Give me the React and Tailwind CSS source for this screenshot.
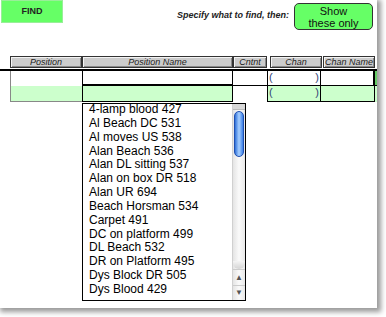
import React from "react";

const items = [
  "4-lamp blood 427",
  "Al Beach DC 531",
  "Al moves US 538",
  "Alan Beach 536",
  "Alan DL sitting 537",
  "Alan on box DR 518",
  "Alan UR 694",
  "Beach Horsman 534",
  "Carpet 491",
  "DC on platform 499",
  "DL Beach 532",
  "DR on Platform 495",
  "Dys Block DR 505",
  "Dys Blood 429",
];

function Hdr({ w, children }) {
  return (
    <div
      className={`${w} h-[12px] bg-[#cccccc] border border-[#333] shadow-[inset_1px_1px_0_#f4f4f4,inset_-1px_-1px_0_#888] flex items-center justify-center text-[9px] italic leading-none text-[#222]`}
    >
      {children}
    </div>
  );
}

function Paren() {
  return (
    <div className="flex justify-between px-[1px] text-[11px] leading-[13px] text-[#334477]">
      <span>(</span>
      <span>)</span>
    </div>
  );
}

export default function App() {
  return (
    <div className="w-[386px] h-[317px] bg-white overflow-hidden" style={{ fontFamily: '"Liberation Sans", Arial, sans-serif' }}>
      <div className="w-[377px] h-[308px] bg-white shadow-[2px_2px_5px_2px_rgba(0,0,0,0.4)] flex flex-col">
        {/* top bar */}
        <div className="flex items-start h-[31px]">
          <div className="ml-[1px] w-[62px] h-[23px] bg-[#66ff66] border border-[#99ee99] flex items-center justify-center text-[9px] font-bold text-[#222]">
            FIND
          </div>
          <div className="ml-auto mt-[9px] text-[9px] font-bold italic text-[#222]">
            Specify what to find, then:
          </div>
          <div className="ml-[5px] mr-[4px] mt-[3px] w-[79px] h-[27px] rounded-[5px] bg-[#66ff66] border border-[#333] flex items-center justify-center text-center text-[11px] leading-[12px] text-[#111]">
            Show
            <br />
            these only
          </div>
        </div>

        {/* header */}
        <div className="mt-[25px] flex pl-[10px]">
          <Hdr w="w-[72px]">Position</Hdr>
          <Hdr w="w-[151px]">Position Name</Hdr>
          <Hdr w="w-[34px]">Cntnt</Hdr>
          <div className="w-[3px]" />
          <Hdr w="w-[52px]">Chan</Hdr>
          <div className="w-[1px]" />
          <Hdr w="w-[52px]">Chan Name</Hdr>
        </div>

        {/* divider line */}
        <div className="mt-[1px] h-[2px] w-[377px] bg-black" />

        {/* row 1 */}
        <div className="flex h-[15px]">
          <div className="w-[10px]" />
          <div className="w-[72px] border-l border-[#888] bg-white" />
          <div className="w-[151px] border-x border-b-2 border-black bg-white" />
          <div className="w-[35px] border-r border-b border-black bg-white" />
          <div className="w-[53px] border-r border-b border-black bg-white">
            <Paren />
          </div>
          <div className="w-[54px] border-r-2 border-b border-black bg-white" />
          <div className="w-[2px] bg-[#66cc66] border-b border-black" />
        </div>

        {/* row 2 */}
        <div className="flex h-[16px]">
          <div className="w-[10px]" />
          <div className="w-[72px] border-l border-b border-[#888] bg-[#ccffcc]" />
          <div className="w-[151px] border-x border-b border-black bg-[#ccffcc]" />
          <div className="w-[35px] bg-white" />
          <div className="-ml-[1px] w-[54px] border-x border-b border-black bg-[#ccffcc]">
            <Paren />
          </div>
          <div className="w-[54px] border-r border-b border-black bg-[#ccffcc]" />
          <div className="w-[2px] bg-[#ccffcc]" />
        </div>

        {/* listbox */}
        <div className="ml-[82px] mt-[1px] w-[164px] h-[198px] border border-black bg-white flex overflow-hidden">
          <div className="flex-1 overflow-hidden">
            <div className="-mt-[1px] pl-[6px]">
              {items.map((t) => (
                <div key={t} className="text-[12px] leading-[13.85px] text-black whitespace-nowrap">
                  {t}
                </div>
              ))}
            </div>
          </div>
          <div className="w-[13px] h-full flex flex-col bg-gradient-to-r from-[#e4e4e4] via-[#fafafa] to-[#e8e8e8] border-l border-[#d0d0d0]">
            <div className="h-[6px] bg-[#d8d8d8] border-b border-[#bbb]" />
            <div className="flex-1 relative">
              <div className="absolute left-[1px] right-[1px] top-[1px] h-[46px] rounded-full bg-gradient-to-r from-[#2d6fd8] via-[#a8d0ff] to-[#3b7fe6] border border-[#1f4fb0]" />
              <div className="absolute left-0 right-0 bottom-0 h-[8px] rounded-b-full bg-gradient-to-b from-[#f4f4f4] to-[#d4d4d4]" />
            </div>
            <div className="h-[16px] flex items-center justify-center border-t border-[#ccc] text-[8px] text-[#555] leading-none">
              ▲
            </div>
            <div className="h-[15px] flex items-center justify-center border-t border-[#ccc] text-[8px] text-[#555] leading-none">
              ▼
            </div>
          </div>
        </div>
      </div>
    </div>
  );
}
